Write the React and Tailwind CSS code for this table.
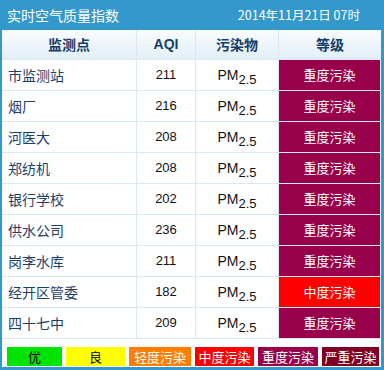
import React from "react";

const rows = [
  ["市监测站", 211, "重度污染"],
  ["烟厂", 216, "重度污染"],
  ["河医大", 208, "重度污染"],
  ["郑纺机", 208, "重度污染"],
  ["银行学校", 202, "重度污染"],
  ["供水公司", 236, "重度污染"],
  ["岗李水库", 211, "重度污染"],
  ["经开区管委", 182, "中度污染"],
  ["四十七中", 209, "重度污染"],
];

const legend = [
  ["优", "bg-[#00e400] text-black", "w-[55px]"],
  ["良", "bg-[#ffff00] text-black", "w-[59px]"],
  ["轻度污染", "bg-[#ff7e00] text-white", "w-[62px]"],
  ["中度污染", "bg-[#ff0000] text-white", "w-[59px]"],
  ["重度污染", "bg-[#99004c] text-white", "w-[60px]"],
  ["严重污染", "bg-[#7e0023] text-white", "w-[57px]"],
];

export default function App() {
  return (
    <div
      className="w-[384px] h-[370px] bg-[#3399cc] flex flex-col"
      style={{ fontFamily: '"Noto Sans CJK SC", "Noto Sans", sans-serif' }}
    >
      <div className="h-[30px] flex items-center justify-between pl-[7px] pr-[24px] text-white">
        <span className="text-[14px]">实时空气质量指数</span>
        <span className="text-[12.5px]">2014年11月21日 07时</span>
      </div>
      <div className="ml-[2px] w-[379px] h-[337px] bg-white flex flex-col">
        <div className="h-[30px] flex bg-gradient-to-b from-[#fafcfe] to-[#e2eff7] border-b border-[#d9e8f1] text-[#123d6b] font-bold text-[14px]">
          <div className="w-[135px] flex items-center justify-center border-r border-[#d9e8f1]">监测点</div>
          <div className="w-[59px] flex items-center justify-center border-r border-[#d9e8f1]" style={{ fontFamily: '"Liberation Sans", sans-serif' }}>AQI</div>
          <div className="w-[83px] flex items-center justify-center border-r border-[#d9e8f1]">污染物</div>
          <div className="flex-1 flex items-center justify-center">等级</div>
        </div>
        {rows.map(([name, aqi, level]) => (
          <div key={name} className="h-[31px] flex border-b border-[#d9e8f1]">
            <div className="w-[135px] flex items-center pl-[6px] border-r border-[#d9e8f1] text-[#1d3e6b] text-[14px]">{name}</div>
            <div className="w-[59px] flex items-center justify-center border-r border-[#d9e8f1] text-[#111] text-[13px]" style={{ fontFamily: '"Liberation Sans", sans-serif' }}>{aqi}</div>
            <div className="w-[83px] flex items-center justify-center border-r border-[#d9e8f1] text-[#111] text-[14px]" style={{ fontFamily: '"Liberation Sans", sans-serif' }}>
              <span>PM<span className="text-[13px] relative top-[4px]">2.5</span></span>
            </div>
            <div className={`w-[101px] flex items-center justify-center text-white text-[13px] ${level === "中度污染" ? "bg-[#ff0000]" : "bg-[#99004c]"}`}>{level}</div>
          </div>
        ))}
        <div className="flex-1 flex items-end pb-[1px] pl-[5px] gap-[4px]">
          {legend.map(([t, c, w]) => (
            <div key={t} className={`h-[19px] flex items-center justify-center text-[13px] ${c} ${w}`}>{t}</div>
          ))}
        </div>
      </div>
    </div>
  );
}
